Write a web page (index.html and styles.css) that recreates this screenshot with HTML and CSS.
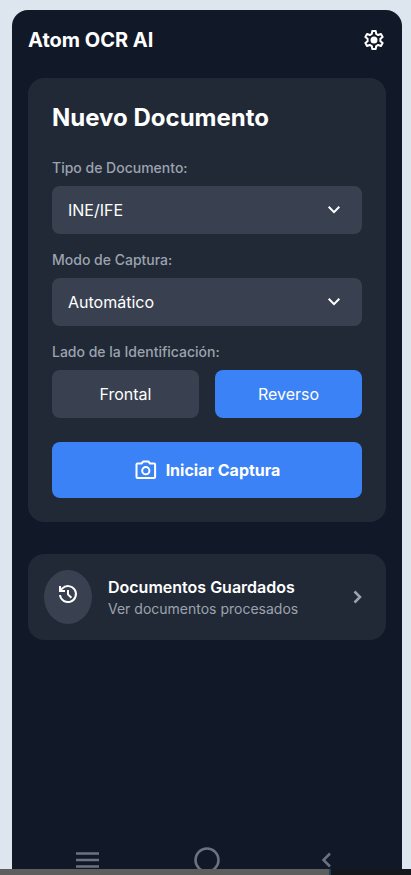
FILE: index.html
```html
<!DOCTYPE html>
<html lang="es">
<head>
<meta charset="utf-8">
<meta name="viewport" content="width=device-width, initial-scale=1">
<title>Atom OCR AI</title>
<link rel="stylesheet" href="styles.css">
</head>
<body>
<div class="phone">
  <header class="topbar">
    <h1>Atom OCR AI</h1>
    <button class="icon-button" type="button" aria-label="Ajustes">
      <svg class="icon" viewBox="0 0 24 24" fill="none" stroke="currentColor" stroke-width="2" stroke-linejoin="round"><path d="M10.300 3h3.400l.5 2.900 2 1.150 2.750-1.050 1.700 2.950-2.250 1.850v2.400l2.250 1.850-1.700 2.950-2.750-1.050-2 1.150-.5 2.900h-3.400l-.5-2.900-2-1.150-2.750 1.050-1.700-2.950 2.250-1.850v-2.400l-2.250-1.850 1.700-2.950 2.750 1.050 2-1.150z"/><circle cx="12" cy="12" r="3.500" fill="currentColor" stroke="none"/></svg>
    </button>
  </header>
  <main>
    <form class="card">
      <h2>Nuevo Documento</h2>
      <div class="field">
        <label for="tipo">Tipo de Documento:</label>
        <div class="select">
          <select id="tipo"><option>INE/IFE</option></select>
          <svg class="icon" viewBox="0 0 24 24" fill="currentColor"><path d="M16.590 8.090L12 12.670 7.410 8.090 6 9.500l6 6 6-6z"/></svg>
        </div>
      </div>
      <div class="field">
        <label for="modo">Modo de Captura:</label>
        <div class="select">
          <select id="modo"><option>Automático</option></select>
          <svg class="icon" viewBox="0 0 24 24" fill="currentColor"><path d="M16.590 8.090L12 12.670 7.410 8.090 6 9.500l6 6 6-6z"/></svg>
        </div>
      </div>
      <div class="field" role="group" aria-labelledby="lado">
        <span class="label" id="lado">Lado de la Identificación:</span>
        <div class="sides">
          <button class="side" type="button" aria-pressed="false">Frontal</button>
          <button class="side selected" type="button" aria-pressed="true">Reverso</button>
        </div>
      </div>
      <button class="start" type="button">
        <svg class="icon" viewBox="0 0 24 24" fill="none" stroke="currentColor" stroke-width="2" stroke-linejoin="round"><path d="M3.500 5.500h4l1.700-2h5.200l1.700 2h4a1 1 0 0 1 1 1v12.500a1 1 0 0 1-1 1h-16.600a1 1 0 0 1-1-1V6.500a1 1 0 0 1 1-1z"/><circle cx="11.800" cy="12.700" r="3.600"/></svg>
        Iniciar Captura
      </button>
    </form>
    <a class="saved" href="#guardados">
      <span class="badge"><svg class="icon" viewBox="0 0 24 24" fill="none" stroke="currentColor" stroke-width="2"><path d="M4 13a8 8 0 1 0 2.300-6.600L4 8.700M4 4v5h5M12 8v4.400l3.400 3.300"/></svg></span>
      <span class="saved-text">
        <span class="saved-title">Documentos Guardados</span>
        <span class="saved-note">Ver documentos procesados</span>
      </span>
      <svg class="icon go" viewBox="0 0 24 24" fill="none" stroke="currentColor" stroke-width="2.500"><path d="M8.500 6.500L14 12l-5.500 5.500"/></svg>
    </a>
  </main>
  <nav class="system" aria-label="Sistema">
    <button type="button" aria-label="Recientes"><svg viewBox="0 0 32 32"><path d="M4 9.500h23M4 16h23M4 22.500h23"/></svg></button>
    <button type="button" aria-label="Inicio"><svg viewBox="0 0 32 32"><circle cx="16" cy="16" r="11.500"/></svg></button>
    <button type="button" aria-label="Atrás"><svg viewBox="0 0 32 32"><path d="M20 9.500L13.500 16l6.500 6.500"/></svg></button>
  </nav>
</div>
<div class="progress"><div class="progress-fill"></div></div>
</body>
</html>
```
FILE: styles.css
```css
* {
  box-sizing: border-box;
}

body {
  display: flex;
  flex-direction: column;
  height: 100vh;
  margin: 0;
  overflow: hidden;
  background: #dde5ef;
  color: #fff;
  font: 16px/24px Inter, sans-serif;
}

h1,
h2 {
  margin: 0;
  font-weight: 700;
}

button,
select {
  margin: 0;
  padding: 0;
  border: 0;
  background: none;
  color: inherit;
  font: inherit;
}

.icon {
  display: block;
  flex: none;
  width: 24px;
  height: 24px;
}

.phone {
  display: flex;
  flex: 1;
  flex-direction: column;
  min-height: 0;
  margin: 10px 9px 0 12px;
  overflow: hidden;
  border-radius: 16px 16px 0 0;
  background: #111827;
}

.topbar {
  display: flex;
  align-items: center;
  justify-content: space-between;
  padding: 16px;
}

h1 {
  font-size: 20px;
  line-height: 28px;
}

main {
  display: flex;
  flex: 1;
  flex-direction: column;
  gap: 32px;
  padding: 8px 16px;
}

.card {
  display: flex;
  flex-direction: column;
  gap: 24px;
  padding: 24px;
  border-radius: 16px;
  background: #212936;
}

h2 {
  font-size: 24px;
  line-height: 32px;
}

.field {
  display: flex;
  flex-direction: column;
  gap: 8px;
}

.field + .field {
  margin-top: -8px;
}

label,
.label {
  color: #9ca3af;
  font-size: 14px;
  font-weight: 500;
  line-height: 20px;
}

.select {
  display: grid;
  align-items: center;
  border-radius: 8px;
  background: #394150;
}

.select > * {
  grid-area: 1 / 1;
}

.select select {
  width: 100%;
  height: 48px;
  padding: 0 48px 0 16px;
  appearance: none;
}

.select .icon {
  justify-self: end;
  margin-right: 16px;
  pointer-events: none;
}

.sides {
  display: grid;
  grid-template-columns: 1fr 1fr;
  gap: 16px;
}

.side {
  padding: 12px;
  border-radius: 8px;
  background: #394150;
}

.side.selected,
.start {
  background: #3b82f6;
}

.start {
  display: flex;
  align-items: center;
  justify-content: center;
  gap: 8px;
  padding: 16px;
  border-radius: 8px;
  font-weight: 700;
}

.saved {
  display: flex;
  align-items: center;
  gap: 16px;
  padding: 16px;
  border-radius: 16px;
  background: #212936;
  color: inherit;
  text-decoration: none;
}

.badge {
  padding: 12px 12px 18px;
  border-radius: 50%;
  background: #394150;
}

.saved-text {
  display: flex;
  flex: 1;
  flex-direction: column;
}

.saved-title {
  font-weight: 600;
}

.saved-note {
  color: #9ca3af;
  font-size: 14px;
  line-height: 20px;
}

.go {
  color: #9ca3af;
}

.system {
  display: flex;
  flex: none;
  align-items: flex-start;
  justify-content: space-around;
  height: 25px;
  padding: 0 16px;
}

.system svg {
  display: block;
  width: 32px;
  height: 32px;
  fill: none;
  stroke: #6b7280;
  stroke-width: 2.500;
}

.progress {
  flex: none;
  height: 6px;
  background: #14171c;
}

.progress-fill {
  width: 80.500%;
  height: 100%;
  border-right: 2px solid #1c4260;
  background: #5e5e5e;
}
```
